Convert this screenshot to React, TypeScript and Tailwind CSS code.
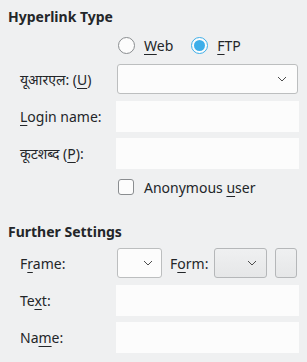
import type { ReactNode } from 'react';

function Mn({ children }: { children: ReactNode }) {
  return <span className="underline underline-offset-[3px] decoration-1">{children}</span>;
}

function Chevron() {
  return (
    <svg width="10" height="6" viewBox="0 0 10 6" className="text-[#4d4d4d]">
      <path d="M1 1 L5 5 L9 1" fill="none" stroke="currentColor" strokeWidth="1" />
    </svg>
  );
}

function Radio({ checked }: { checked?: boolean }) {
  return checked ? (
    <span className="w-[17px] h-[17px] rounded-full border border-[#3daee9] bg-[#fcfcfc] flex items-center justify-center">
      <span className="w-[11px] h-[11px] rounded-full bg-[#3daee9]" />
    </span>
  ) : (
    <span className="w-[17px] h-[17px] rounded-full border border-[#8a8d90] bg-[#fcfcfc]" />
  );
}

function Field() {
  return <div className="h-[31px] bg-[#fcfcfc]" />;
}

function Label({ children }: { children: ReactNode }) {
  return <div className="pl-3 flex items-center">{children}</div>;
}

export default function App() {
  return (
    <div
      className="w-[307px] h-[362px] bg-[#eff0f1] text-[#232629] text-[14px] leading-[19px] px-2 pt-[7px]"
      style={{ fontFamily: '"Noto Sans", "Open Sans", sans-serif' }}
    >
      <div className="font-bold">Hyperlink Type</div>
      <div className="flex items-center h-[26px] mt-[6px] ml-[110px]">
        <Radio />
        <span className="ml-[9px]"><Mn>W</Mn>eb</span>
        <span className="ml-[18px] flex"><Radio checked /></span>
        <span className="ml-[9px]"><Mn>F</Mn>TP</span>
      </div>

      <div className="grid grid-cols-[108px_1fr] grid-rows-[32px_31px_31px_24px] gap-y-[6px] mt-[5px]">
        <Label>
          यूआरएल: (<Mn>U</Mn>)
        </Label>
        <div className="flex items-center">
          <div className="h-[30px] w-[181px] ml-px border border-[#bcbebf] rounded-[3px] bg-[#fcfcfc] flex items-center justify-end pr-[10px]">
            <Chevron />
          </div>
        </div>
        <Label>
          <span><Mn>L</Mn>ogin name:</span>
        </Label>
        <Field />
        <Label>
          कूटशब्द (<Mn>P</Mn>):
        </Label>
        <Field />
        <div />
        <div className="flex items-center ml-[2px]">
          <span className="w-[16px] h-[16px] rounded-[3px] border border-[#8a8d90] bg-[#fcfcfc]" />
          <span className="ml-[10px]">
            Anonymous <Mn>u</Mn>ser
          </span>
        </div>
      </div>

      <div className="font-bold mt-[23px]">Further Settings</div>

      <div className="grid grid-cols-[108px_1fr] grid-rows-[32px_31px_31px] gap-y-[6px] mt-[6px]">
        <Label>
          <span>F<Mn>r</Mn>ame:</span>
        </Label>
        <div className="flex items-center">
          <div className="h-[30px] w-[45px] ml-px border border-[#bcbebf] rounded-[3px] bg-[#fcfcfc] flex items-center justify-end pr-[8px]">
            <Chevron />
          </div>
          <span className="ml-[8px]">F<Mn>o</Mn>rm:</span>
          <div className="h-[30px] w-[53px] ml-[6px] border border-[#b5b7b9] rounded-[3px] bg-gradient-to-b from-[#eff0f1] to-[#e6e7e8] flex items-center justify-end pr-[9px]">
            <Chevron />
          </div>
          <div className="h-[30px] w-[22px] ml-[8px] border border-[#b5b7b9] rounded-[3px] bg-gradient-to-b from-[#eff0f1] to-[#e6e7e8]" />
        </div>
        <Label>
          <span>Te<Mn>x</Mn>t:</span>
        </Label>
        <Field />
        <Label>
          <span>Na<Mn>m</Mn>e:</span>
        </Label>
        <Field />
      </div>
    </div>
  );
}
